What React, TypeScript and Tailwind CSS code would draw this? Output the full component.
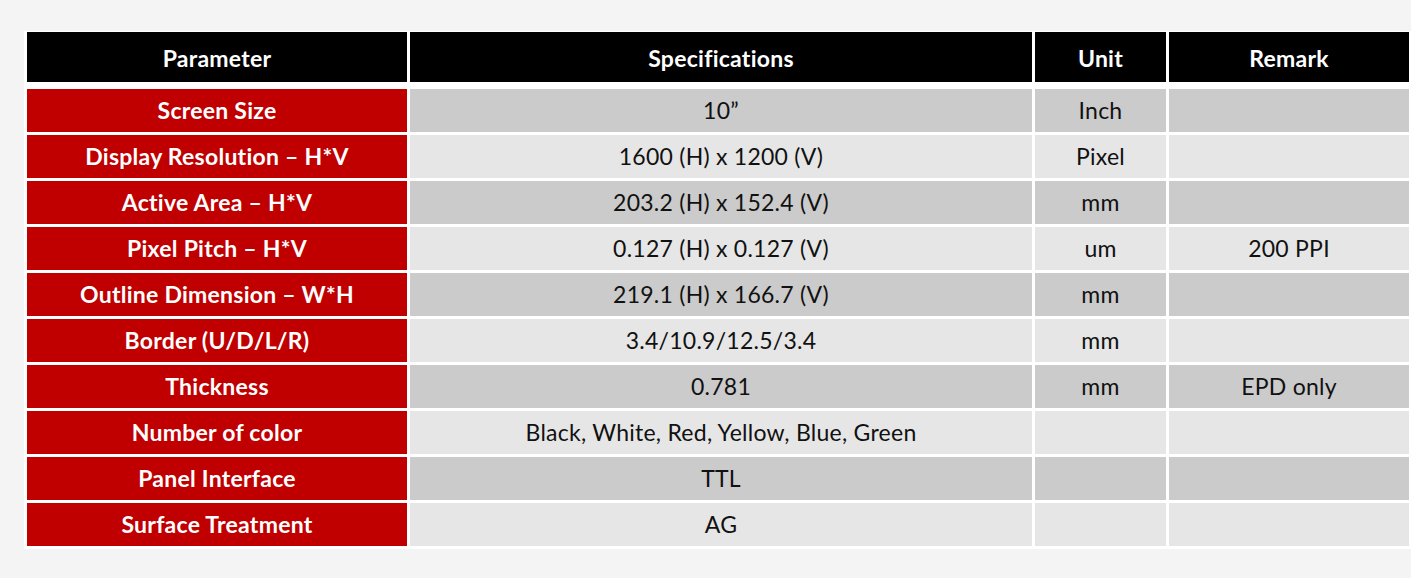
import React from "react";

const rows: [string, string, string, string][] = [
  ["Screen Size", "10\u201D", "Inch", ""],
  ["Display Resolution \u2013 H*V", "1600 (H) x 1200 (V)", "Pixel", ""],
  ["Active Area \u2013 H*V", "203.2 (H) x 152.4 (V)", "mm", ""],
  ["Pixel Pitch \u2013 H*V", "0.127 (H) x 0.127 (V)", "um", "200 PPI"],
  ["Outline Dimension \u2013 W*H", "219.1 (H) x 166.7 (V)", "mm", ""],
  ["Border (U/D/L/R)", "3.4/10.9/12.5/3.4", "mm", ""],
  ["Thickness", "0.781", "mm", "EPD only"],
  ["Number of color", "Black, White, Red, Yellow, Blue, Green", "", ""],
  ["Panel Interface", "TTL", "", ""],
  ["Surface Treatment", "AG", "", ""],
];

export default function App() {
  return (
    <div
      className="w-[1411px] h-[578px] bg-[#f4f4f4] pt-[31px] pl-[24px] overflow-hidden"
      style={{ fontFamily: "Lato, 'Open Sans', sans-serif" }}
    >
      <div className="bg-white pl-[3px] pt-[1px] pr-[2px] pb-[3px] flex flex-col gap-[3px] tracking-[0.25px]">
        <div className="grid grid-cols-[380px_622px_131px_240px] gap-[3px] h-[50px] mb-[4px] text-white font-bold text-[23px] leading-none">
          {["Parameter", "Specifications", "Unit", "Remark"].map((h) => (
            <div key={h} className="bg-black flex items-center justify-center pt-[2px]">
              {h}
            </div>
          ))}
        </div>
        {rows.map((r, i) => {
          const bg = i % 2 === 0 ? "bg-[#cbcbcb]" : "bg-[#e6e6e6]";
          return (
            <div
              key={r[0]}
              className="grid grid-cols-[380px_622px_131px_240px] gap-[3px] h-[43px] text-[23px] leading-none"
            >
              <div className="bg-[#c00000] text-white font-bold flex items-center justify-center pb-[1px]">
                {r[0]}
              </div>
              <div className={`${bg} text-[#111] flex items-center justify-center pb-[1px]`}>{r[1]}</div>
              <div className={`${bg} text-[#111] flex items-center justify-center pb-[1px]`}>{r[2]}</div>
              <div className={`${bg} text-[#111] flex items-center justify-center pb-[1px]`}>{r[3]}</div>
            </div>
          );
        })}
      </div>
    </div>
  );
}
